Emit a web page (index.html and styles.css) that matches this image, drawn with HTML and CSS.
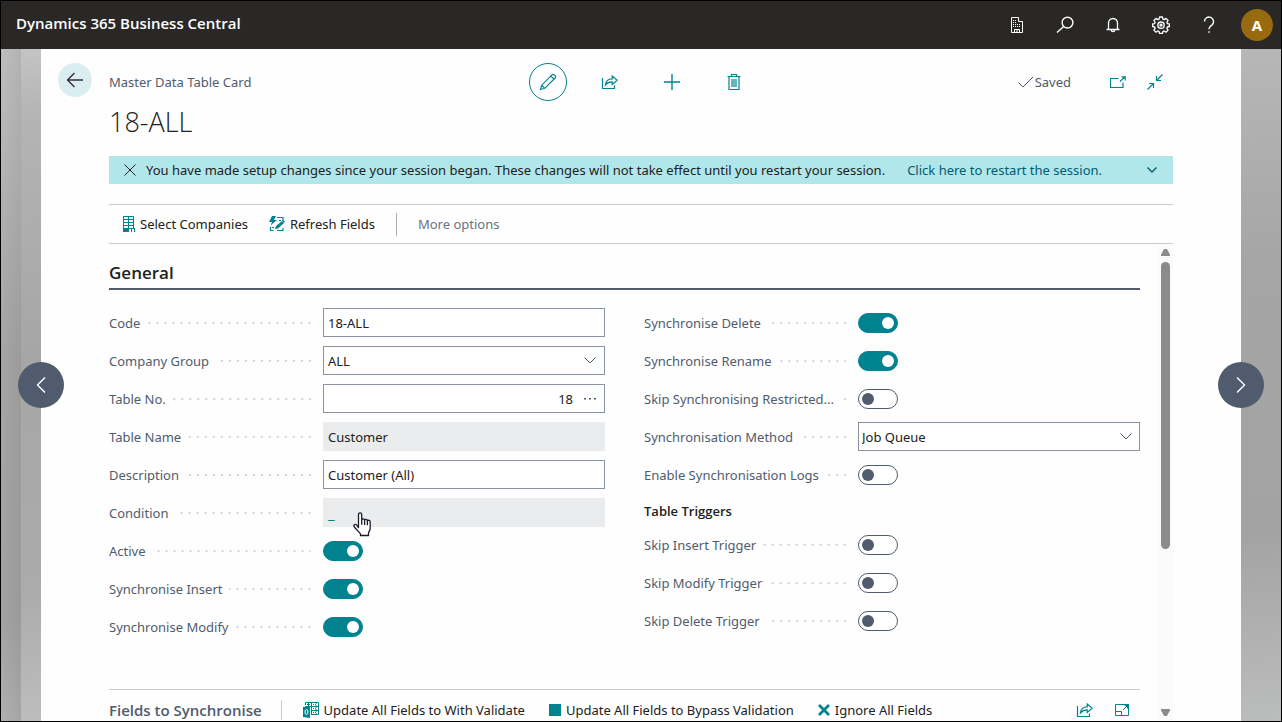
FILE: index.html
```html
<!DOCTYPE html>
<html lang="en">
<head>
    <meta charset="UTF-8">
    <meta name="viewport" content="width=device-width, initial-scale=1.0">
    <title>18-ALL - Master Data Table Card - Dynamics 365 Business Central</title>
    <link rel="stylesheet" href="styles.css">
</head>
<body>

<header class="topbar">
    <a class="brand" href="#">Dynamics 365 Business Central</a>
    <nav class="topbar-tools">
        <button class="top-btn" type="button" aria-label="Company">
            <svg width="16" height="18" viewBox="0 0 16 18" fill="none" stroke="currentColor">
                <path d="M2.500 16.500v-15h7v4h4v11z"/>
                <path d="M5.500 16.500v-3h5v3M8 14v2"/>
                <path d="M4 4.500h4M4 6.500h4M4 8.500h8M4 10.500h8" stroke-dasharray="1 1"/>
            </svg>
        </button>
        <button class="top-btn" type="button" aria-label="Search">
            <svg width="18" height="18" viewBox="0 0 18 18" fill="none" stroke="currentColor" stroke-width="1.4">
                <circle cx="11.500" cy="6.600" r="5.400"/>
                <path d="M7.700 10.400L1 16.600"/>
            </svg>
        </button>
        <button class="top-btn" type="button" aria-label="Notifications">
            <svg width="16" height="18" viewBox="0 0 16 18" fill="none" stroke="currentColor" stroke-width="1.3">
                <path d="M1.500 13.500h13M3.500 13.500V7a4.500 4.500 0 0 1 9 0v6.500M6.300 14a1.700 1.700 0 0 0 3.400 0"/>
            </svg>
        </button>
        <button class="top-btn" type="button" aria-label="Settings">
            <svg width="18" height="18" viewBox="0 0 18 18" fill="none" stroke="currentColor" stroke-width="1.3" stroke-linejoin="round">
                <path d="M7.500 1h3l.4 2.100 1.300.55 1.800-1.250 2.100 2.100-1.250 1.800.55 1.300 2 .4v2.500l-2 .5-.55 1.300 1.250 1.800-2.100 2.100-1.800-1.250-1.300.55-.4 1.900h-3l-.4-1.900-1.300-.55-1.800 1.250-2.100-2.100 1.250-1.800-.55-1.300-2-.5V8l2-.4.55-1.300L1.900 4.500 4 2.400l1.800 1.250 1.300-.55z"/>
                <circle cx="9" cy="9.200" r="3.200"/>
                <circle cx="9" cy="9.200" r="1"/>
            </svg>
        </button>
        <button class="top-btn" type="button" aria-label="Help">
            <svg width="14" height="18" viewBox="0 0 14 18" fill="none" stroke="currentColor" stroke-width="1.400">
                <path d="M2.500 5.500a4.500 4.500 0 1 1 7.700 3.200C8.400 10.400 7 11 7 13.300M7 15.200v1.600"/>
            </svg>
        </button>
        <button class="avatar" type="button" aria-label="Account">A</button>
    </nav>
</header>

<div class="stage">
    <main class="card">
        <div class="card-head">
            <button class="back" type="button" aria-label="Back">
                <svg width="16" height="16" viewBox="0 0 16 16" fill="none" stroke="currentColor" stroke-width="1.400">
                    <path d="M0.500 8H16M7.500 1L0.500 8l7 7"/>
                </svg>
            </button>
            <span class="page-type">Master Data Table Card</span>
            <div class="head-actions">
                <button class="icon-btn ring" type="button" aria-label="Edit">
                    <svg width="18" height="18" viewBox="0 0 18 18" fill="none" stroke="currentColor" stroke-width="1.200">
                        <path d="M1.500 16.500l1.200-4.300L13 1.900a1.600 1.600 0 0 1 2.300 0l.8.8a1.600 1.600 0 0 1 0 2.300L5.800 15.300zM2.700 12.200l3.100 3.100M11.800 3.100l3.100 3.100"/>
                    </svg>
                </button>
                <button class="icon-btn" type="button" aria-label="Share">
                    <svg width="18" height="16" viewBox="0 0 18 16" fill="none" stroke="currentColor" stroke-width="1.200">
                        <path d="M1.500 4v10.500h12V11.500M4.500 10.800c.4-4 2.800-6 6.700-6V2l5 4.200-5 4.200V7.900c-3 0-5 .8-6.700 2.900z"/>
                    </svg>
                </button>
                <button class="icon-btn" type="button" aria-label="New">
                    <svg width="16" height="16" viewBox="0 0 16 16" fill="none" stroke="currentColor" stroke-width="1.400">
                        <path d="M8 0v16M0 8h16"/>
                    </svg>
                </button>
                <button class="icon-btn" type="button" aria-label="Delete">
                    <svg width="14" height="18" viewBox="0 0 14 18" fill="none" stroke="currentColor" stroke-width="1.200">
                        <path d="M0.500 3.500h13M4.500 3.500v-2h5v2M2 3.500v13h10v-13M5 6v8M7 6v8M9 6v8"/>
                    </svg>
                </button>
            </div>
            <div class="head-status">
                <span class="saved">
                    <svg width="16" height="12" viewBox="0 0 16 12" fill="none" stroke="currentColor">
                        <path d="M0.500 6.500l4.500 4.500L15 1"/>
                    </svg>
                    Saved
                </span>
                <button class="small-btn" type="button" aria-label="Open in new window">
                    <svg width="16" height="12" viewBox="0 0 16 12" fill="none" stroke="currentColor" stroke-width="1.200">
                        <path d="M8.500 2.500h-8v9h12.500V6.500M10 5.500L15 0.800M11.500 0.800H15.200v3.700"/>
                    </svg>
                </button>
                <button class="small-btn" type="button" aria-label="Collapse">
                    <svg width="16" height="16" viewBox="0 0 16 16" fill="none" stroke="currentColor" stroke-width="1.200">
                        <path d="M15.500 0.500L9.500 6.500M9.500 2v4.500H14M0.500 15.500l6-6M2 9.500h4.500V14"/>
                    </svg>
                </button>
            </div>
        </div>

        <h1 class="record-title">18-ALL</h1>

        <div class="notice">
            <button class="notice-close" type="button" aria-label="Dismiss">
                <svg width="12" height="12" viewBox="0 0 12 12" fill="none" stroke="currentColor"><path d="M0.500 0.500l11 11M11.500 0.500l-11 11"/></svg>
            </button>
            <span>You have made setup changes since your session began. These changes will not take effect until you restart your session.</span>
            <a class="notice-link" href="#">Click here to restart the session.</a>
            <button class="notice-more" type="button" aria-label="More notifications">
                <svg width="10" height="6" viewBox="0 0 10 6" fill="none" stroke="currentColor" stroke-width="1.400"><path d="M0.500 0.500L5 5l4.500-4.500"/></svg>
            </button>
        </div>

        <div class="actionbar">
            <button class="action" type="button">
                <svg class="teal" width="14" height="16" viewBox="0 0 14 16" fill="none" stroke="currentColor">
                    <path d="M2.500 0.500h10v12M2.500 0.500V14M7.500 0.500V12M2.500 3.500h10M2.500 6.500h10M2.500 9.500h10"/>
                    <path fill="currentColor" stroke="none" d="M2 12h12v4h-1v-3h-2v3h-1v-3H8v3H2z"/>
                </svg>
                Select Companies
            </button>
            <button class="action" type="button">
                <svg class="teal" width="16" height="16" viewBox="0 0 16 16" fill="none" stroke="currentColor" stroke-width="1.200">
                    <path fill="currentColor" stroke="none" d="M3 0h4L5 4h3L1.500 9.500 3 6H0z"/>
                    <path d="M8 1.500h6V4M10 4.500h2M1.500 11v3.500h3M8 14.500h6V12M3 11.500h2"/>
                    <path fill="currentColor" stroke="none" d="M6 13l1-3 6-5 2 2-6 5.500zM13 4.500l1-.7 2 2-1 .8z"/>
                </svg>
                Refresh Fields
            </button>
            <span class="divider"></span>
            <button class="action muted" type="button">More options</button>
        </div>

        <div class="scroll-area">
            <div class="content">
                <section class="general">
                    <h2 class="section-title">General</h2>
                    <form class="fields">
                        <div class="column">
                            <div class="field">
                                <label class="caption" for="code"><span>Code</span></label>
                                <div class="box"><input id="code" type="text" value="18-ALL"></div>
                            </div>
                            <div class="field">
                                <label class="caption" for="group"><span>Company Group</span></label>
                                <div class="box">
                                    <input id="group" type="text" value="ALL">
                                    <button class="box-btn" type="button" aria-label="Choose company group">
                                        <svg width="12" height="7" viewBox="0 0 12 7" fill="none" stroke="currentColor"><path d="M0.500 0.500L6 6l5.500-5.500"/></svg>
                                    </button>
                                </div>
                            </div>
                            <div class="field">
                                <label class="caption" for="table-no"><span>Table No.</span></label>
                                <div class="box">
                                    <input class="number" id="table-no" type="text" value="18">
                                    <button class="box-btn" type="button" aria-label="Look up table">
                                        <svg width="12" height="2" viewBox="0 0 12 2" fill="currentColor"><path d="M0 0h2v1.500H0zM5 0h2v1.500H5zM10 0h2v1.500h-2z"/></svg>
                                    </button>
                                </div>
                            </div>
                            <div class="field">
                                <label class="caption" for="table-name"><span>Table Name</span></label>
                                <div class="box readonly"><input id="table-name" type="text" value="Customer" readonly></div>
                            </div>
                            <div class="field">
                                <label class="caption" for="description"><span>Description</span></label>
                                <div class="box"><input id="description" type="text" value="Customer (All)"></div>
                            </div>
                            <div class="field">
                                <span class="caption"><span>Condition</span></span>
                                <div class="box readonly">
                                    <a class="drill" href="#">_</a>
                                    <svg class="pointer" width="18" height="25" viewBox="0 0 18 25" fill="#fff" stroke="#1b1b2b" stroke-width="1.300" stroke-linejoin="round">
                                        <path d="M5.500 15.500V2.400a1.600 1.600 0 0 1 3.200 0v5.200c.5-1 2.600-.9 2.900.4.6-.9 2.500-.7 2.800.6.800-.7 2.800-.3 2.800 1.300v6.500c0 2.300-1.700 3.500-1.700 5.100v2H7.500v-1.600L1.300 15c-1.200-1.800.6-3.400 2.200-2.100z"/>
                                        <path d="M8.700 7.600v5.200M11.600 8v5M14.400 8.600v4.600" fill="none"/>
                                    </svg>
                                </div>
                            </div>
                            <div class="field">
                                <label class="caption" for="active"><span>Active</span></label>
                                <input class="toggle" id="active" type="checkbox" checked>
                            </div>
                            <div class="field">
                                <label class="caption" for="sync-insert"><span>Synchronise Insert</span></label>
                                <input class="toggle" id="sync-insert" type="checkbox" checked>
                            </div>
                            <div class="field">
                                <label class="caption" for="sync-modify"><span>Synchronise Modify</span></label>
                                <input class="toggle" id="sync-modify" type="checkbox" checked>
                            </div>
                        </div>

                        <div class="column">
                            <div class="field">
                                <label class="caption" for="sync-delete"><span>Synchronise Delete</span></label>
                                <input class="toggle" id="sync-delete" type="checkbox" checked>
                            </div>
                            <div class="field">
                                <label class="caption" for="sync-rename"><span>Synchronise Rename</span></label>
                                <input class="toggle" id="sync-rename" type="checkbox" checked>
                            </div>
                            <div class="field">
                                <label class="caption" for="skip-restricted"><span>Skip Synchronising Restricted...</span></label>
                                <input class="toggle" id="skip-restricted" type="checkbox">
                            </div>
                            <div class="field">
                                <label class="caption" for="method"><span>Synchronisation Method</span></label>
                                <div class="box select">
                                    <select id="method"><option>Job Queue</option></select>
                                    <svg width="12" height="7" viewBox="0 0 12 7" fill="none" stroke="currentColor"><path d="M0.500 0.500L6 6l5.500-5.500"/></svg>
                                </div>
                            </div>
                            <div class="field">
                                <label class="caption" for="logs"><span>Enable Synchronisation Logs</span></label>
                                <input class="toggle" id="logs" type="checkbox">
                            </div>
                            <h3 class="group-title">Table Triggers</h3>
                            <div class="field">
                                <label class="caption" for="skip-insert"><span>Skip Insert Trigger</span></label>
                                <input class="toggle" id="skip-insert" type="checkbox">
                            </div>
                            <div class="field">
                                <label class="caption" for="skip-modify"><span>Skip Modify Trigger</span></label>
                                <input class="toggle" id="skip-modify" type="checkbox">
                            </div>
                            <div class="field">
                                <label class="caption" for="skip-delete"><span>Skip Delete Trigger</span></label>
                                <input class="toggle" id="skip-delete" type="checkbox">
                            </div>
                        </div>
                    </form>
                </section>

                <section class="part">
                    <h2 class="part-title">Fields to Synchronise</h2>
                    <div class="part-actions">
                        <button class="action" type="button">
                            <svg class="teal" width="16" height="16" viewBox="0 0 16 16" fill="none" stroke="currentColor">
                                <path d="M2.500 3V0.500h13v12H8M8.500 0.500v12M2.500 4.500h13M8 8.500h7.500M4 2.500h3M5.500 1v3M10 2.500h1M13.500 1.500l-1.500 1 1.500 1M10 6.500h1M13.500 5.500l-1.500 1 1.500 1M10 10.500h1M13.500 9.500l-1.500 1 1.500 1"/>
                                <path fill="currentColor" stroke="none" d="M0 5l7-1v12l-7-1z"/>
                                <ellipse cx="3.500" cy="10" rx="1.500" ry="2.500" stroke="#fff"/>
                            </svg>
                            Update All Fields to With Validate
                        </button>
                        <button class="action" type="button">
                            <svg class="teal" width="12" height="12" viewBox="0 0 12 12"><path fill="currentColor" d="M0 0h12v12H0z"/></svg>
                            Update All Fields to Bypass Validation
                        </button>
                        <button class="action" type="button">
                            <svg class="teal" width="12" height="12" viewBox="0 0 12 12" fill="none" stroke="currentColor" stroke-width="2.800"><path d="M1 1l10 10M11 1L1 11"/></svg>
                            Ignore All Fields
                        </button>
                    </div>
                    <div class="part-tools">
                        <button class="small-btn" type="button" aria-label="Share list">
                            <svg width="18" height="16" viewBox="0 0 18 16" fill="none" stroke="currentColor" stroke-width="1.200">
                                <path d="M1.500 4v10.500h12V11.500M4.500 10.800c.4-4 2.800-6 6.700-6V2l5 4.200-5 4.200V7.900c-3 0-5 .8-6.700 2.900z"/>
                            </svg>
                        </button>
                        <button class="small-btn" type="button" aria-label="Expand list">
                            <svg width="14" height="12" viewBox="0 0 14 12" fill="none" stroke="currentColor">
                                <path d="M0.500 0.500h13v11H0.500zM0.500 7.500h6v4M8 6l5.500-5.500M9.500 1.500h3v3"/>
                            </svg>
                        </button>
                    </div>
                </section>
            </div>

            <div class="scrollbar" aria-hidden="true">
                <span class="arrow-up"></span>
                <div class="track"><div class="thumb"></div></div>
                <span class="arrow-down"></span>
            </div>
        </div>
    </main>

    <button class="pager prev" type="button" aria-label="Previous record">
        <svg width="10" height="16" viewBox="0 0 10 16" fill="none" stroke="currentColor" stroke-width="1.400"><path d="M9 0.500L1.500 8 9 15.500"/></svg>
    </button>
    <button class="pager next" type="button" aria-label="Next record">
        <svg width="10" height="16" viewBox="0 0 10 16" fill="none" stroke="currentColor" stroke-width="1.400"><path d="M1 0.500L8.500 8 1 15.500"/></svg>
    </button>
</div>

</body>
</html>
```
FILE: styles.css
```css
* {
    box-sizing: border-box;
}

body {
    margin: 0;
    height: 100vh;
    display: flex;
    flex-direction: column;
    overflow: hidden;
    border: 1px solid #000;
    background: #fff;
    color: #212121;
    font-family: "Noto Sans", "Open Sans", sans-serif;
    font-size: 13px;
    line-height: 20px;
}

button, input, select {
    font: inherit;
    color: inherit;
}

button {
    display: flex;
    align-items: center;
    justify-content: center;
    padding: 0;
    border: 0;
    background: none;
    white-space: nowrap;
}

a {
    text-decoration: none;
}

svg {
    flex: none;
}

/* Top bar */
.topbar {
    flex: none;
    display: flex;
    align-items: center;
    justify-content: space-between;
    height: 48px;
    padding: 0 8px 0 15px;
    background: #292827;
    color: #fff;
}

.brand {
    padding-bottom: 4px;
    color: #fff;
    font-family: "Open Sans", sans-serif;
    font-size: 15px;
    font-weight: 600;
}

.topbar-tools {
    display: flex;
    align-items: center;
    gap: 16px;
}

.top-btn {
    width: 32px;
    height: 32px;
}

.avatar {
    width: 32px;
    height: 32px;
    border-radius: 50%;
    background: #986a0f;
    font-size: 15px;
    font-weight: 700;
}

/* Stage with the stacked pages showing at the sides */
.stage {
    flex: 1;
    min-height: 0;
    display: flex;
    position: relative;
    padding: 0 40px;
    background:
        linear-gradient(172deg, #c3c4c6 0, #b4b4b4 10%, #a6a6a6 45%, #ababab 80%, #bcbdbe 100%) 20px 0 / 20px 100% no-repeat,
        linear-gradient(to right, transparent, rgba(0, 0, 0, 0.06)) 0 0 / 20px 100% no-repeat,
        linear-gradient(176deg, #bebebe 0, #a5a5a5 40%, #a3a3a3 75%, #bbbcbc 100%);
}

.card {
    flex: 1;
    min-width: 0;
    display: flex;
    flex-direction: column;
    padding: 12px 68px 0;
    background: #fefefe;
}

.card-head {
    display: grid;
    grid-template-columns: 1fr auto 1fr;
    align-items: center;
    height: 42px;
    color: #505c6d;
}

/* the back button hangs in the left gutter of the card */
.back {
    grid-area: 1 / 1;
    align-self: start;
    width: 34px;
    height: 34px;
    margin: 2px 0 0 -51px;
    border-radius: 50%;
    background: #daeef2;
    color: #33303c;
}

.page-type {
    grid-area: 1 / 1;
}

.head-actions {
    display: flex;
    gap: 24px;
}

.icon-btn {
    width: 38px;
    height: 38px;
    color: #00838f;
}

.ring {
    border: 1px solid #00838f;
    border-radius: 50%;
}

.head-status {
    display: flex;
    justify-content: flex-end;
    align-items: center;
    gap: 13px;
    padding-right: 6px;
}

.saved {
    display: flex;
    align-items: center;
    gap: 1px;
    margin-right: 22px;
}

.small-btn {
    width: 24px;
    height: 24px;
    color: #00838f;
}

.record-title {
    margin: 0;
    font-family: "Open Sans", sans-serif;
    font-size: 27px;
    font-weight: 300;
    line-height: 38px;
}

.notice {
    display: flex;
    align-items: center;
    height: 28px;
    margin-top: 15px;
    padding: 0 16px 0 15px;
    background: #b1e7ea;
    white-space: nowrap;
}

.notice-close {
    width: 12px;
    margin-right: 10px;
}

.notice-link {
    margin-left: 22px;
    color: #005c70;
}

.notice-more {
    margin-left: auto;
    color: #005c70;
}

.actionbar {
    display: flex;
    align-items: center;
    gap: 21px;
    height: 40px;
    margin-top: 20px;
    padding-left: 12px;
    border-top: 1px solid #c9cbce;
    border-bottom: 1px solid #c9cbce;
}

.action {
    gap: 5px;
}

.muted {
    color: #6b7280;
}

.divider {
    width: 1px;
    height: 23px;
    background: #a9adb3;
}

.teal {
    color: #00838f;
}

/* Scrolling content */
.scroll-area {
    flex: 1;
    min-height: 0;
    display: flex;
    gap: 18px;
    overflow: hidden;
}

.content {
    flex: 1;
    min-width: 0;
}

.general {
    padding: 16px 0 48px;
}

.section-title {
    margin: 0 0 18px;
    padding-bottom: 2px;
    border-bottom: 2px solid #505c6d;
    font-family: "Open Sans", sans-serif;
    font-size: 17px;
    font-weight: 600;
    line-height: 26px;
}

.fields {
    display: grid;
    grid-template-columns: 1fr 1fr;
    gap: 39px;
}

.column {
    display: flex;
    flex-direction: column;
    gap: 9px;
}

.field {
    display: flex;
    align-items: center;
    gap: 12px;
    height: 29px;
}

.caption {
    flex: none;
    display: flex;
    align-items: center;
    gap: 7px;
    width: 202px;
    color: #505c6d;
    white-space: nowrap;
}

/* dotted leader between the caption and its value */
.caption::after {
    content: "";
    flex: 1;
    height: 2px;
    background: linear-gradient(to left, #d3d6da 2px, transparent 2px) right / 8px 2px;
}

.box {
    flex: 1;
    min-width: 0;
    height: 29px;
    display: flex;
    align-items: center;
    position: relative;
    border: 1px solid #8a93a0;
    background: #fff;
}

.box input {
    flex: 1;
    min-width: 0;
    height: 100%;
    padding: 0 4px;
    border: 0;
    outline: 0;
    background: none;
}

.box .number {
    padding-right: 3px;
    text-align: right;
}

.box-btn {
    width: 28px;
    height: 100%;
    color: #505c6d;
}

.readonly {
    border-color: #ebecee;
    background: #ebecee;
}

.drill {
    padding: 0 4px;
    color: #00838f;
    font-size: 15px;
}

.pointer {
    position: absolute;
    left: 29px;
    top: 13px;
    z-index: 1;
}

.select {
    display: grid;
    align-items: center;
}

.select select {
    grid-area: 1 / 1;
    width: 100%;
    height: 100%;
    padding: 0 3px;
    border: 0;
    appearance: none;
    background: none;
}

.select svg {
    grid-area: 1 / 1;
    justify-self: end;
    margin-right: 7px;
    color: #505c6d;
    pointer-events: none;
}

.toggle {
    appearance: none;
    display: flex;
    align-items: center;
    width: 40px;
    height: 20px;
    margin: 0;
    padding: 0 3px;
    border: 1px solid #505c6d;
    border-radius: 10px;
    background: #fff;
}

.toggle::before {
    content: "";
    width: 12px;
    height: 12px;
    border-radius: 50%;
    background: #505c6d;
}

.toggle:checked {
    justify-content: flex-end;
    border-color: #00838f;
    background: #00838f;
}

.toggle:checked::before {
    background: #fff;
}

.group-title {
    margin: 0;
    padding-top: 3px;
    font-family: "Open Sans", sans-serif;
    font-size: 13px;
    font-weight: 600;
    line-height: 20px;
}

/* Lines part */
.part {
    display: flex;
    align-items: center;
    height: 40px;
    border-top: 1px solid #c9cbce;
}

.part-title {
    margin: 0 19px 0 0;
    color: #505c6d;
    font-family: "Open Sans", sans-serif;
    font-size: 15px;
    font-weight: 600;
}

.part-actions {
    display: flex;
    align-items: center;
    gap: 24px;
    padding-left: 21px;
    border-left: 1px solid #c9cbce;
}

.part-tools {
    display: flex;
    gap: 13px;
    margin-left: auto;
    padding-right: 6px;
}

.scrollbar {
    width: 15px;
    display: flex;
    flex-direction: column;
    align-items: center;
    padding: 5px 0;
    background: #fbfbfb;
}

.track {
    flex: 1;
    padding: 6px 0;
}

.thumb {
    width: 9px;
    height: 65%;
    border-radius: 5px;
    background: #8b8b8b;
}

.arrow-up, .arrow-down {
    width: 9px;
    height: 7px;
    background: #8b8b8b;
    clip-path: polygon(35% 0, 65% 0, 100% 80%, 100% 100%, 0 100%, 0 80%);
}

.arrow-down {
    clip-path: polygon(0 0, 100% 0, 100% 20%, 65% 100%, 35% 100%, 0 20%);
}

/* Previous / next record */
.pager {
    position: absolute;
    top: 50%;
    width: 46px;
    height: 46px;
    margin-top: -23px;
    border-radius: 50%;
    background: #505c6d;
    color: #fff;
}

.prev {
    left: 17px;
}

.next {
    right: 17px;
}
```
